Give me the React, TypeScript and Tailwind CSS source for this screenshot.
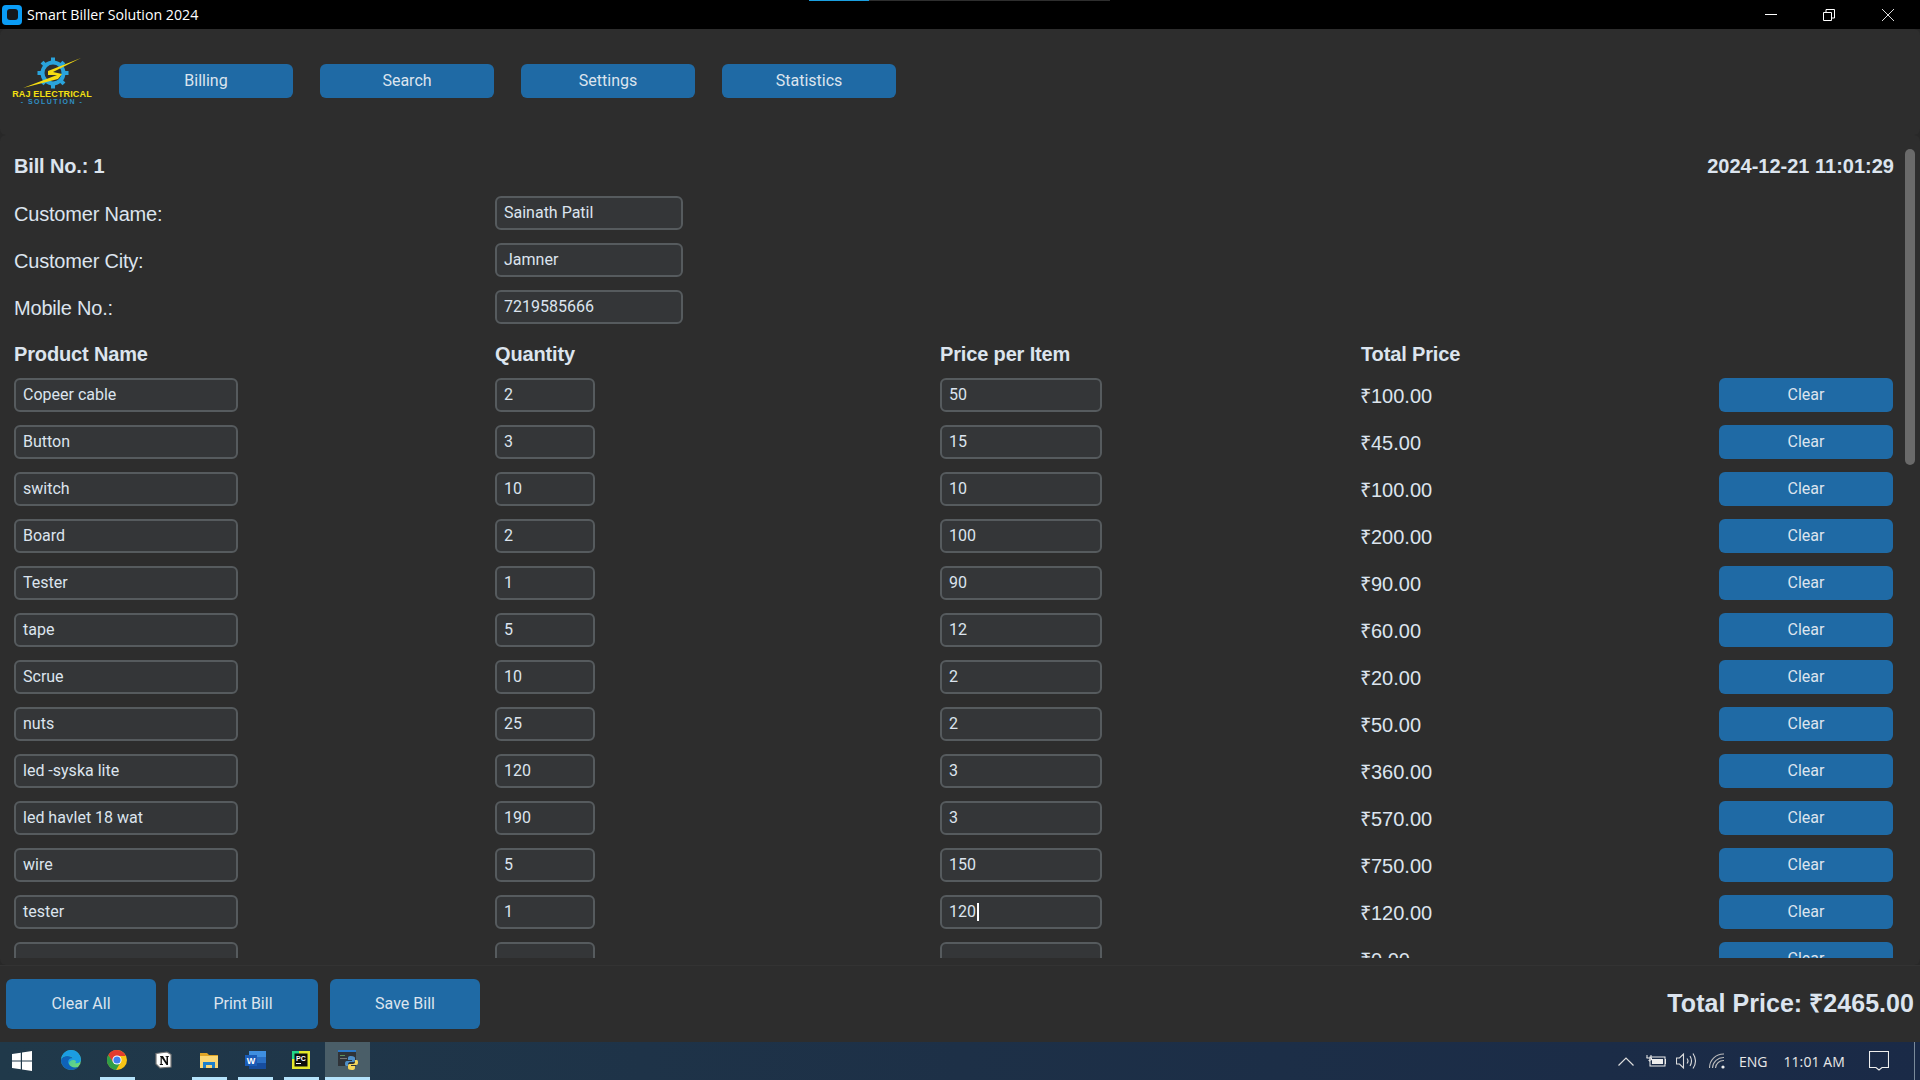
import React from "react";

const rows: [string, string, string, string][] = [
  ["Copeer cable", "2", "50", "₹100.00"],
  ["Button", "3", "15", "₹45.00"],
  ["switch", "10", "10", "₹100.00"],
  ["Board", "2", "100", "₹200.00"],
  ["Tester", "1", "90", "₹90.00"],
  ["tape", "5", "12", "₹60.00"],
  ["Scrue", "10", "2", "₹20.00"],
  ["nuts", "25", "2", "₹50.00"],
  ["led -syska lite", "120", "3", "₹360.00"],
  ["led havlet 18 wat", "190", "3", "₹570.00"],
  ["wire", "5", "150", "₹750.00"],
  ["tester", "1", "120", "₹120.00"],
  ["", "", "", "₹0.00"],
];

function Field({ value, className, caret }: { value: string; className: string; caret?: boolean }) {
  return (
    <div className={`h-[34px] shrink-0 rounded-[6px] border-2 border-[#565b5e] bg-[#343638] px-[7px] flex items-center text-[16px] text-[#dce4ee] font-['Roboto',sans-serif] ${className}`}>
      <span>{value}</span>
      {caret && <span className="ml-px h-[18px] w-[2px] bg-white" />}
    </div>
  );
}

function NavButton({ label }: { label: string }) {
  return (
    <div className="w-[174px] h-[34px] rounded-[6px] bg-[#1f6aa5] flex items-center justify-center text-[16px] text-[#dce4ee] font-['Roboto',sans-serif]">
      {label}
    </div>
  );
}

function FootButton({ label }: { label: string }) {
  return (
    <div className="w-[150px] h-[50px] rounded-[6px] bg-[#1f6aa5] flex items-center justify-center text-[16px] text-[#dce4ee] font-['Roboto',sans-serif]">
      {label}
    </div>
  );
}

function Logo() {
  const teeth = [0, 45, 90, 135, 180, 225, 270, 315];
  return (
    <div className="w-[80px] h-[56px] flex flex-col items-center">
      <svg width="80" height="37" viewBox="0 0 80 37" className="shrink-0">
        <g transform="translate(41 20)">
          <circle r="10.5" fill="none" stroke="#2aa3dc" strokeWidth="4" />
          {teeth.map((a) => (
            <rect key={a} x="-2" y="-15.5" width="4" height="4" fill="#2aa3dc" transform={`rotate(${a})`} />
          ))}
        </g>
        <path d="M69 5 L36 18 L36 22 L45 22 L11 35 L46 26 L50 21 L41 19 Z" fill="#f5dc12" />
      </svg>
      <div className="mt-[-1px] text-[9px] leading-[10px] font-bold text-[#f4e011] whitespace-nowrap font-['Liberation_Sans',sans-serif] tracking-[0.15px]">RAJ ELECTRICAL</div>
      <div className="mt-[-1px] text-[7px] leading-[8px] font-bold tracking-[1.5px] text-[#2f8fc4] whitespace-nowrap font-['Liberation_Sans',sans-serif]">- SOLUTION -</div>
    </div>
  );
}

function Win() {
  return (
    <svg width="20" height="20" viewBox="0 0 20 20"><path d="M0 3 L8.8 1.7 V9.5 H0 Z M10 1.5 L20 0 V9.5 H10 Z M0 10.5 H8.8 V18.3 L0 17 Z M10 10.5 H20 V20 L10 18.5 Z" fill="#fff" /></svg>
  );
}
function Edge() {
  return (
    <svg width="20" height="20" viewBox="0 0 20 20">
      <defs>
        <linearGradient id="eg" x1="0" y1="0" x2="1" y2="1"><stop offset="0" stopColor="#22b8c8" /><stop offset="1" stopColor="#7fe06a" /></linearGradient>
      </defs>
      <circle cx="10" cy="10" r="10" fill="url(#eg)" />
      <path d="M0 10 C0 16 5 20 10 20 C13 20 16 19 17 17 C13 18 9 17 8 14 C7 11 10 9 13 9 C10 5 1 5 0 10 Z" fill="#0f62b8" />
      <path d="M8 14 C8 11 10 10 12 10 C15 10 16 12 14 13 C17 14 20 12 20 10 C20 5 16 0 10 0 C5 0 1 4 0 9 C3 5 9 5 12 8 C8 8 6 11 8 14 Z" fill="#1b9de2" />
    </svg>
  );
}
function Chrome() {
  return (
    <svg width="20" height="20" viewBox="0 0 20 20">
      <circle cx="10" cy="10" r="10" fill="#f9c515" />
      <path d="M10 0 A10 10 0 0 0 1.3 5 L5.5 12.5 L10 6 H18.7 A10 10 0 0 0 10 0 Z" fill="#e33b2e" />
      <path d="M1.3 5 A10 10 0 0 0 9 20 L13.2 13 L6 12 Z" fill="#2f9e47" />
      <circle cx="10" cy="10" r="4.6" fill="#fff" />
      <circle cx="10" cy="10" r="3.6" fill="#3f7fee" />
    </svg>
  );
}
function Notion() {
  return (
    <svg width="17" height="18" viewBox="0 0 17 18">
      <path d="M1 2.5 L12 1 L16 3.5 V16 L5 17 L1 13 Z" fill="#fff" stroke="#777" strokeWidth="1.2" />
      <path d="M5 5 H8 L11.5 11 V5.8 H10.5 V5 H14 V5.8 H13 V14 H11.5 L6.8 7 V13 H8 V14 H4.8 V13 H5.6 V5.8 H5 Z" fill="#111" />
    </svg>
  );
}
function Explorer() {
  return (
    <svg width="18" height="16" viewBox="0 0 18 16">
      <path d="M0 1 H7 L9 3 H18 V5 H0 Z" fill="#e0a526" />
      <rect y="4" width="18" height="12" fill="#fbd774" />
      <path d="M3 16 V10 H15 V16 H12 V13 H6 V16 Z" fill="#1e7fcb" />
    </svg>
  );
}
function Word() {
  return (
    <svg width="21" height="18" viewBox="0 0 21 18">
      <rect x="4" y="0" width="17" height="6" fill="#3f8fe0" />
      <rect x="4" y="6" width="17" height="6" fill="#2a6fc4" />
      <rect x="4" y="12" width="17" height="6" fill="#174d9e" />
      <rect x="0" y="4" width="12" height="11" fill="#1a5cb8" />
      <text x="6" y="13" textAnchor="middle" fontSize="9" fontWeight="700" fill="#fff" fontFamily="Liberation Sans">W</text>
    </svg>
  );
}
function PyCharm() {
  return (
    <svg width="18" height="18" viewBox="0 0 18 18">
      <rect width="18" height="18" fill="#e4e82a" />
      <rect x="0" y="0" width="7" height="8" fill="#21d789" />
      <rect x="2.5" y="2.5" width="13" height="13" fill="#0d0d0d" />
      <text x="4" y="9.5" fontSize="7" fontWeight="700" fill="#fff" fontFamily="Liberation Sans">PC</text>
      <rect x="4" y="12" width="5" height="1" fill="#fff" />
    </svg>
  );
}
function PyApp() {
  return (
    <svg width="20" height="20" viewBox="0 0 20 20">
      <rect x="0" y="1" width="18" height="15" fill="#2f3338" />
      <rect x="0" y="0" width="18" height="2" fill="#2a78c8" />
      <rect x="2" y="5" width="5" height="1" fill="#5e8f5a" />
      <rect x="2" y="8" width="7" height="1" fill="#777" />
      <path d="M13 6 C10 6 10 7 10 9 V10 H14 V11 H9 C7 11 7 13 7 14 C7 16 8 16 9 16 H10 V14 C10 13 11 12 12 12 H15 C16 12 17 12 17 10 V8 C17 7 16 6 13 6 Z" fill="#4f8fc8" />
      <path d="M14 20 C17 20 17 19 17 17 V16 H13 V15 H18 C20 15 20 13 20 12 C20 10 19 10 18 10 H17 V12 C17 13 16 14 15 14 H12 C11 14 10 14 10 16 V18 C10 19 11 20 14 20 Z" fill="#f5d65a" />
    </svg>
  );
}

function TaskIcon({ children, underline }: { children: React.ReactNode; underline?: boolean }) {
  return (
    <div className="w-[46px] h-full flex flex-col">
      <div className="flex-1 flex items-center justify-center">{children}</div>
      <div className={`h-[3px] mx-[5.5px] ${underline ? "bg-[#b5e3fb]" : ""}`} />
    </div>
  );
}

export default function App() {
  return (
    <div className="relative w-[1920px] h-[1080px] overflow-hidden flex flex-col bg-[#282828] text-[#dce4ee] font-['Liberation_Sans',sans-serif]">
      {/* strip of the window above */}
      <div className="absolute left-[809px] top-0 h-[1px] w-[60px] bg-[#1a9fe0]" />
      <div className="absolute left-[869px] top-0 h-[1px] w-[241px] bg-[#2e2e2e]" />

      {/* title bar */}
      <div className="h-[29px] shrink-0 bg-black flex items-center">
        <div className="ml-[2px] w-[20px] h-[20px] rounded-[4px] bg-[#0a9cf5] flex items-start justify-center pt-[4px]">
          <div className="w-[11px] h-[11px] rounded-[3px] bg-[#15181c]" />
        </div>
        <span className="ml-[5px] text-[14.2px] text-white font-['Open_Sans',sans-serif]">Smart Biller Solution 2024</span>
        <div className="ml-auto flex items-center h-full">
          <div className="w-[58px] flex justify-center">
            <svg width="12" height="2" viewBox="0 0 12 2"><rect width="12" height="1" fill="#fff" /></svg>
          </div>
          <div className="w-[58px] flex justify-center">
            <svg width="12" height="12" viewBox="0 0 12 12" fill="none" stroke="#fff"><path d="M0.5 3.5 H8.5 V11.5 H0.5 Z M3 3 V0.5 H11.5 V9 H9" /></svg>
          </div>
          <div className="w-[60px] mr-[2px] flex justify-center">
            <svg width="12" height="12" viewBox="0 0 12 12" stroke="#ddd" strokeWidth="1"><path d="M0 0 L12 12 M12 0 L0 12" /></svg>
          </div>
        </div>
      </div>

      {/* nav */}
      <div className="h-[106px] shrink-0 bg-[#2d2d2d] rounded-[6px] flex items-start pt-[24px] pl-[12px]">
        <Logo />
        <div className="flex gap-[27px] ml-[27px] mt-[11px]">
          <NavButton label="Billing" />
          <NavButton label="Search" />
          <NavButton label="Settings" />
          <NavButton label="Statistics" />
        </div>
      </div>

      {/* scrollable bill */}
      <div className="h-[830px] shrink-0 bg-[#2d2d2d] rounded-[6px] pb-[7px]">
        <div className="h-[823px] flex">
          <div className="flex-1 overflow-hidden pl-[14px] pr-[11px] pt-[14px]">
            <div className="h-[34px] flex items-center justify-between text-[20px] font-bold">
              <span className="tracking-[-0.15px]">Bill No.: 1</span>
              <span className="whitespace-nowrap">2024-12-21 11:01:29</span>
            </div>
            {[
              ["Customer Name:", "Sainath Patil"],
              ["Customer City:", "Jamner"],
              ["Mobile No.:", "7219585666"],
            ].map(([l, v]) => (
              <div key={l} className="mt-[13px] h-[34px] flex items-center">
                <span className="w-[481px] text-[20px] pt-[2px] tracking-[-0.2px]">{l}</span>
                <Field value={v} className="w-[188px]" />
              </div>
            ))}
            <div className="mt-[13px] h-[34px] flex items-center text-[20px] font-bold tracking-[-0.15px]">
              <span className="w-[481px]">Product Name</span>
              <span className="w-[445px]">Quantity</span>
              <span className="w-[420px]">Price per Item</span>
              <span className="ml-px">Total Price</span>
            </div>
            <div className="mt-[7px] flex flex-col gap-[13px]">
              {rows.map((r, i) => (
                <div key={i} className="h-[34px] flex items-center shrink-0">
                  <div className="w-[481px]"><Field value={r[0]} className="w-[224px]" /></div>
                  <div className="w-[445px]"><Field value={r[1]} className="w-[100px]" /></div>
                  <div className="w-[420px]"><Field value={r[2]} className="w-[162px]" caret={i === 11} /></div>
                  <div className="w-[359px] text-[20px] pt-[2px]">{r[3]}</div>
                  <div className="w-[174px] h-[34px] rounded-[6px] bg-[#1f6aa5] flex items-center justify-center text-[16px] font-['Roboto',sans-serif]">Clear</div>
                </div>
              ))}
            </div>
          </div>
          <div className="w-[15px] shrink-0 pt-[14px]">
            <div className="w-[10px] h-[316px] rounded-[5px] bg-[#6a6a6a]" />
          </div>
        </div>
      </div>

      {/* footer */}
      <div className="flex-1 bg-[#2d2d2d] border-t border-[#333333] flex items-start pt-[13px] pl-[6px] pr-[6px]">
        <div className="flex gap-[12px]">
          <FootButton label="Clear All" />
          <FootButton label="Print Bill" />
          <FootButton label="Save Bill" />
        </div>
        <div className="ml-auto h-[50px] flex items-center text-[25px] font-bold tracking-[0.05px]">Total Price: ₹2465.00</div>
      </div>

      {/* taskbar */}
      <div className="h-[38px] shrink-0 flex items-stretch bg-gradient-to-r from-[#20394a] via-[#1d3047] to-[#1a2a47]">
        <div className="w-[48px] pl-[12px] flex items-center"><Win /></div>
        <div className="flex">
          <TaskIcon><Edge /></TaskIcon>
          <TaskIcon underline><Chrome /></TaskIcon>
          <TaskIcon><Notion /></TaskIcon>
          <TaskIcon underline><Explorer /></TaskIcon>
          <TaskIcon underline><Word /></TaskIcon>
          <TaskIcon underline><PyCharm /></TaskIcon>
          <div className="ml-[1px] w-[45px] h-full flex flex-col bg-[#4a5e68]">
            <div className="flex-1 flex items-center justify-center"><PyApp /></div>
            <div className="h-[3px] bg-[#b5e3fb]" />
          </div>
        </div>
        <div className="ml-auto flex items-center text-[14px] text-[#e8e8e8] font-['Open_Sans',sans-serif]">
          <svg width="16" height="9" viewBox="0 0 16 9" fill="none" stroke="#ddd" strokeWidth="1.2"><path d="M0.5 8.5 L8 1 L15.5 8.5" /></svg>
          <svg className="ml-[12px]" width="20" height="12" viewBox="0 0 20 12"><path d="M1 0 V3 M5 0 V3 M0.5 3 H5.5 V5 H3 V6 H4" fill="none" stroke="#eee" /><rect x="4" y="2" width="15" height="9" fill="none" stroke="#eee" /><rect x="6" y="4" width="11" height="5" fill="#eee" /><rect x="19" y="4" width="1" height="5" fill="#eee" /></svg>
          <svg className="ml-[10px]" width="21" height="18" viewBox="0 0 21 18" fill="none" stroke="#ddd" strokeWidth="1.1"><path d="M0.5 6 H3.5 L7.5 2 V16 L3.5 12 H0.5 Z M11 6.5 Q13 9 11 11.5 M14 4 Q17 9 14 14 M17 1.5 Q22 9 17 16.5" /></svg>
          <svg className="ml-[12px]" width="17" height="16" viewBox="0 0 17 16" fill="none" stroke="#bbb" strokeWidth="1.1"><path d="M0.5 15 A14 14 0 0 1 15 1 M3.5 15 A11 11 0 0 1 15 4.5 M6.5 15 A8 8 0 0 1 15 7.5" /><circle cx="14" cy="14" r="1.6" fill="#eee" stroke="none" /></svg>
          <span className="ml-[13px]">ENG</span>
          <span className="ml-[16px] tracking-[0.1px]">11:01 AM</span>
          <svg className="ml-[24px]" width="20" height="20" viewBox="0 0 20 20" fill="none" stroke="#eee" strokeWidth="1.1"><path d="M0.5 0.5 H19.5 V16.5 H13 L10 19 L7 16.5 H0.5 Z" /></svg>
          <div className="ml-[25px] mr-[5px] w-px h-full bg-[#7a8a9a]" />
        </div>
      </div>
    </div>
  );
}
